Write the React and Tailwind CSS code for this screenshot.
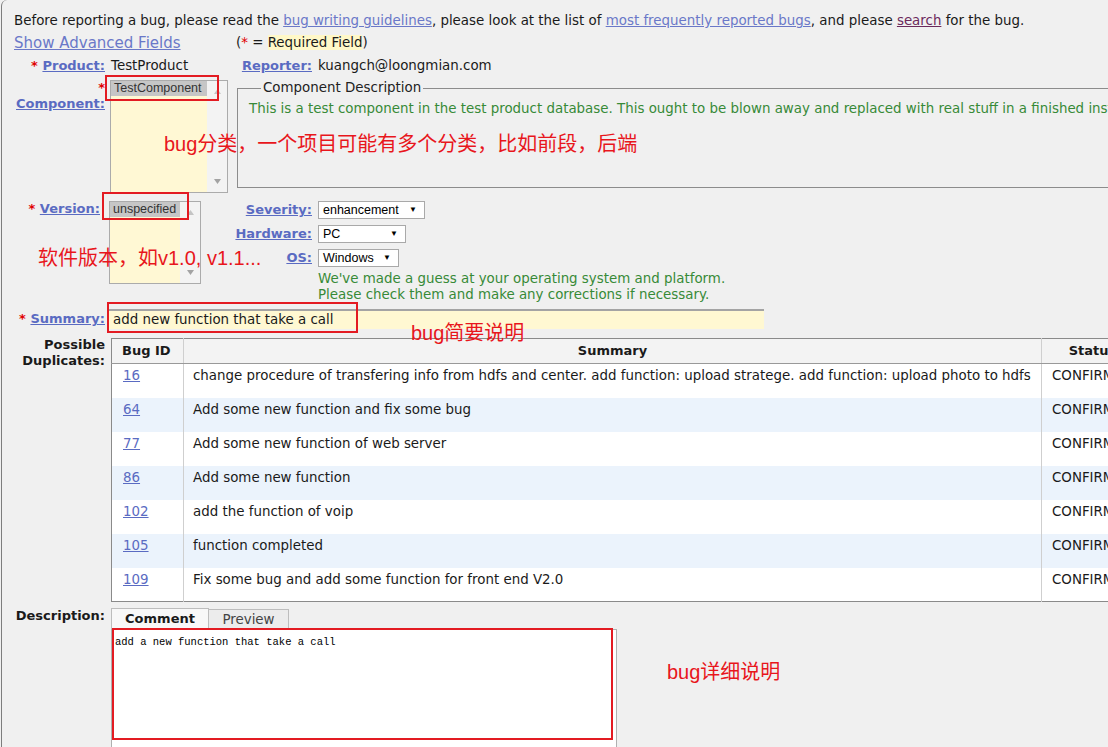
const linkCls = "text-[#5a6bc2] underline";
const lbl = "shrink-0 text-right font-bold text-[13px] whitespace-nowrap";

function Star() {
  return <span className="text-[#e00000]">*</span>;
}

function Arrows() {
  return (
    <div className="w-[20px] flex flex-col justify-between items-center py-[8px] bg-[#f3f3f3]">
      <svg width="7" height="5" viewBox="0 0 7 5"><path d="M3.5 0 L7 5 L0 5 Z" fill="#c4c4c4" /></svg>
      <svg width="7" height="5" viewBox="0 0 7 5"><path d="M0 0 L7 0 L3.5 5 Z" fill="#a3a3a3" /></svg>
    </div>
  );
}

function Select({ value, w }) {
  return (
    <div className={`${w} shrink-0 h-[18px] border border-[#a9a9a9] bg-white flex items-center justify-between pl-[4px] pr-[7px] font-['Liberation_Sans',Arial,sans-serif] text-[12.5px] text-black`}>
      <span>{value}</span>
      <span className="text-[8px]">▼</span>
    </div>
  );
}

const bugs = [
  [16, "change procedure of transfering info from hdfs and center. add function: upload stratege. add function: upload photo to hdfs"],
  [64, "Add some new function and fix some bug"],
  [77, "Add some new function of web server"],
  [86, "Add some new function"],
  [102, "add the function of voip"],
  [105, "function completed"],
  [109, "Fix some bug and add some function for front end V2.0"],
];

const note = "absolute whitespace-nowrap font-['Liberation_Sans','Noto_Sans_CJK_SC',sans-serif] text-[20px] leading-[22px] text-[#e8161c]";

export default function App() {
  return (
    <div className="relative w-[1108px] h-[747px] overflow-hidden bg-[#f0f0f0] font-['DejaVu_Sans',Verdana,sans-serif] text-[13.4px] leading-[16px] text-[#1a1a1a]">
      <div className="ml-[1px] h-full border-l border-[#7d7d7d] rounded-tl-[6px] pl-[12px] pt-[13px]">
        {/* intro */}
        <p className="whitespace-nowrap">
          Before reporting a bug, please read the <a className="text-[#6a78c8] underline">bug writing guidelines</a>, please look at the list of{" "}
          <a className="text-[#6a78c8] underline">most frequently reported bugs</a>, and please <a className="text-[#6b2a5c] underline">search</a> for the bug.
        </p>

        <div className="mt-[5px] flex items-center h-[18px]">
          <a className="w-[222px] shrink-0 text-[15px] leading-[18px] text-[#6a78c8] underline">Show Advanced Fields</a>
          <span>
            (<span className="text-[#e00000]">*</span> = <span className="bg-[#fff8c8]">Required Field</span>)
          </span>
        </div>

        {/* Product row */}
        <div className="mt-[6px] flex h-[16px] whitespace-nowrap">
          <div className={`${lbl} w-[96px] pr-[5px]`}>
            <Star /> <a className={linkCls}>Product:</a>
          </div>
          <div className="w-[122px] shrink-0 pl-[1px]">TestProduct</div>
          <div className={`${lbl} w-[86px] pr-[6px]`}>
            <a className={linkCls}>Reporter:</a>
          </div>
          <div>kuangch@loongmian.com</div>
        </div>

        {/* Component row */}
        <div className="mt-[6px] flex">
          <div className={`${lbl} w-[96px] pr-[5px]`}>
            <div><Star /></div>
            <div><a className={linkCls}>Component:</a></div>
          </div>
          <div className="w-[122px] shrink-0">
            <div className="w-[118px] h-[113px] border border-[#ababab] flex">
              <div className="w-[96px] bg-[#fff8d4] overflow-hidden">
                <div className="h-[15px] bg-[#c6c6c6] pl-[3px] whitespace-nowrap font-['Liberation_Sans',Arial,sans-serif] text-[12.5px] leading-[15px] text-[#333]">TestComponent</div>
              </div>
              <Arrows />
            </div>
          </div>
          <fieldset className="ml-[5px] w-[900px] h-[108px] shrink-0 border border-[#8c8c8c] pl-[11px] whitespace-nowrap">
            <legend className="ml-[12px] px-[2px] text-[#222]">Component Description</legend>
            <div className="mt-[5px] text-[#378a37]">
              This is a test component in the test product database. This ought to be blown away and replaced with real stuff in a finished installation of bugzilla.
            </div>
          </fieldset>
        </div>

        {/* Version row */}
        <div className="mt-[8px] flex">
          <div className={`${lbl} w-[95px] pr-[9px]`}>
            <Star /> <a className={linkCls}>Version:</a>
          </div>
          <div className="w-[123px] shrink-0">
            <div className="w-[92px] h-[83px] border border-[#ababab] flex">
              <div className="w-[70px] bg-[#fff8d4] overflow-hidden">
                <div className="h-[15px] bg-[#c6c6c6] pl-[3px] whitespace-nowrap font-['Liberation_Sans',Arial,sans-serif] text-[12.5px] leading-[15px] text-[#333]">unspecified</div>
              </div>
              <Arrows />
            </div>
          </div>
          <div className="flex flex-col gap-[6px]">
            <div className="flex items-center h-[18px]">
              <div className={`${lbl} w-[86px] pr-[6px]`}><a className={linkCls}>Severity:</a></div>
              <Select value="enhancement" w="w-[107px]" />
            </div>
            <div className="flex items-center h-[18px]">
              <div className={`${lbl} w-[86px] pr-[6px]`}><a className={linkCls}>Hardware:</a></div>
              <Select value="PC" w="w-[88px]" />
            </div>
            <div className="flex items-center h-[18px]">
              <div className={`${lbl} w-[86px] pr-[6px]`}><a className={linkCls}>OS:</a></div>
              <Select value="Windows" w="w-[81px]" />
            </div>
            <div className="pl-[86px] -mt-[2px] text-[#378a37] whitespace-nowrap">
              <div>We've made a guess at your operating system and platform.</div>
              <div>Please check them and make any corrections if necessary.</div>
            </div>
          </div>
        </div>

        {/* Summary row */}
        <div className="mt-[6px] flex items-center h-[20px]">
          <div className={`${lbl} w-[94px] pr-[3px]`}>
            <Star /> <a className={linkCls}>Summary:</a>
          </div>
          <div className="w-[656px] shrink-0 h-[20px] bg-[#fff8d2] border-t-2 border-l border-[#a4a4a4] pl-[4px] leading-[18px] text-[#1a1a1a]">
            add new function that take a call
          </div>
        </div>

        {/* Possible duplicates */}
        <div className="mt-[9px] flex">
          <div className={`${lbl} w-[97px] pr-[6px] -mt-[1px]`}>
            Possible
            <br />
            Duplicates:
          </div>
          <table className="shrink-0 w-[1032px] table-fixed border-collapse border border-[#8a8a8a] bg-white">
            <colgroup>
              <col className="w-[72px]" />
              <col className="w-[858px]" />
              <col className="w-[102px]" />
            </colgroup>
            <thead>
              <tr className="h-[25px] bg-[#f3f3f3] text-[13px]">
                <th className="text-left pl-[10px] font-bold border-b border-[#999]">Bug ID</th>
                <th className="text-center font-bold border-b border-l border-[#999] border-l-[#cfcfcf]">Summary</th>
                <th className="text-center font-bold border-b border-l border-[#999] border-l-[#cfcfcf] whitespace-nowrap overflow-hidden">Status</th>
              </tr>
            </thead>
            <tbody>
              {bugs.map(([id, s], i) => (
                <tr key={id} className={i % 2 === 1 ? "h-[34px] bg-[#ebf3fc]" : "h-[34px] bg-white"}>
                  <td className="align-top pt-[4px] pl-[11px]"><a className={linkCls}>{id}</a></td>
                  <td className="align-top pt-[4px] pl-[9px] border-l border-[#cfcfcf] whitespace-nowrap">{s}</td>
                  <td className="align-top pt-[4px] pl-[10px] border-l border-[#cfcfcf] whitespace-nowrap overflow-hidden">CONFIRMED</td>
                </tr>
              ))}
            </tbody>
          </table>
        </div>

        {/* Description */}
        <div className="mt-[6px] flex">
          <div className={`${lbl} w-[97px] pr-[6px]`}>Description:</div>
          <div>
            <div className="flex items-end h-[21px]">
              <div className="w-[98px] h-[21px] border border-b-0 border-[#bdbdbd] bg-[#f8f8f8] font-bold text-[13px] text-center leading-[20px]">Comment</div>
              <div className="w-[80px] h-[20px] border border-b-0 border-l-0 border-[#bdbdbd] bg-[#ececec] text-center leading-[19px] text-[#444]">Preview</div>
            </div>
            <div className="w-[506px] h-[130px] border border-[#b0b0b0] bg-white pl-[3px] pt-[5px] font-['Liberation_Mono',monospace] text-[10.5px] leading-[14px] text-black">
              add a new function that take a call
            </div>
          </div>
        </div>
      </div>

      {/* annotations */}
      <div className="absolute left-[105px] top-[75px] w-[114px] h-[26px] border-2 border-[#e31b22]" />
      <div className="absolute left-[102px] top-[192px] w-[87px] h-[28px] border-2 border-[#e31b22]" />
      <div className="absolute left-[107px] top-[302px] w-[251px] h-[31px] border-2 border-[#e31b22]" />
      <div className="absolute left-[112px] top-[628px] w-[501px] h-[112px] border-2 border-[#e31b22]" />

      <div className={`${note} left-[164px] top-[133px]`}>bug分类，一个项目可能有多个分类，比如前段，后端</div>
      <div className={`${note} left-[38px] top-[247px]`}>软件版本，如v1.0, v1.1...</div>
      <div className={`${note} left-[411px] top-[322px]`}>bug简要说明</div>
      <div className={`${note} left-[667px] top-[661px]`}>bug详细说明</div>
    </div>
  );
}
